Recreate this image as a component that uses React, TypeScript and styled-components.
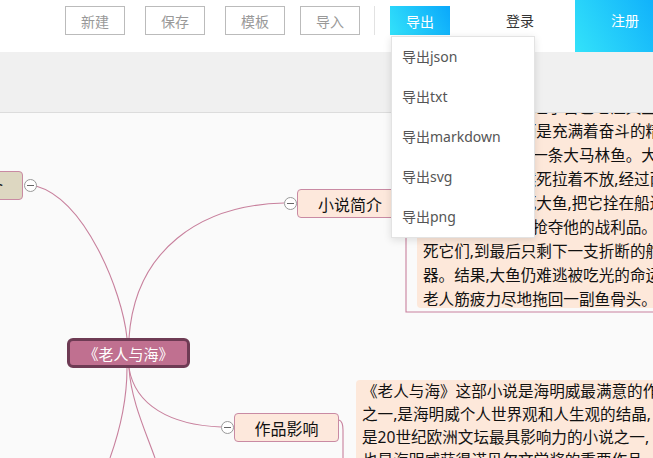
import React from "react"
import styled, { createGlobalStyle, css } from "styled-components"

const GlobalStyle = createGlobalStyle`
  html, body {
    margin: 0;
    padding: 0;
    overflow: hidden;
  }
  body {
    font-family: "Noto Sans", "Noto Sans CJK SC", sans-serif;
    background: #fafafa;
  }
`

const Page = styled.div`
  width: 653px;
  height: 458px;
  overflow: hidden;
  display: flex;
  flex-direction: column;
`

const Header = styled.header`
  position: relative;
  z-index: 5;
  flex: none;
  height: 52px;
  width: 720px;
  background: #fff;
  display: flex;
  align-items: flex-start;
  padding-left: 65px;
  box-sizing: border-box;
`

const ToolButton = styled.button<{ $gap?: number }>`
  margin: 6px 0 0 ${p => p.$gap ?? 0}px;
  width: 60px;
  height: 29px;
  box-sizing: border-box;
  border: 1px solid #bbb;
  background: #fff;
  color: #999;
  font-family: inherit;
  font-size: 14px;
  padding: 0;
  cursor: pointer;
`

const Divider = styled.span`
  margin: 6px 0 0 14px;
  width: 1px;
  height: 29px;
  background: #e2e2e2;
`

const ExportWrap = styled.div`
  position: relative;
  margin-left: 15px;
`

const gradient = css`
  background: linear-gradient(60deg, #33e2fa 0%, #0aa8fb 100%);
  color: #fff;
`

const ExportButton = styled.button`
  ${gradient};
  margin-top: 6px;
  width: 60px;
  height: 29px;
  border: none;
  font-family: inherit;
  font-size: 14px;
  padding: 0;
`

const Menu = styled.ul`
  position: absolute;
  top: 36px;
  left: 1px;
  width: 142px;
  margin: 0;
  padding: 0;
  list-style: none;
  background: #fff;
  border: 1px solid #e3e3e3;
  box-shadow: 0 2px 8px rgba(0, 0, 0, 0.12);
`

const MenuItem = styled.li`
  height: 40px;
  line-height: 40px;
  padding-left: 10px;
  font-size: 14px;
  color: #555;
`

const Login = styled.span`
  margin: 6px 0 0 40px;
  width: 60px;
  height: 29px;
  line-height: 29px;
  text-align: center;
  font-size: 14px;
  color: #333;
`

const Register = styled.span`
  ${gradient};
  margin-left: 25px;
  width: 100px;
  height: 52px;
  padding-top: 11px;
  box-sizing: border-box;
  line-height: 20px;
  text-align: center;
  font-size: 14px;
`

const Band = styled.div`
  flex: none;
  height: 60px;
  background: #f0f0f0;
  border-bottom: 1px solid #dcdcdc;
`

const Canvas = styled.div`
  position: relative;
  flex: 1;
  overflow: hidden;
  background: #fafafa;
`

const Links = styled.svg`
  position: absolute;
  left: 0;
  top: 0;
  width: 653px;
  height: 345px;
  overflow: visible;
`

type Pos = { $x: number; $y: number }

const Node = styled.div<Pos & { $w: number; $kind?: "root" | "side" }>`
  position: absolute;
  left: ${p => p.$x}px;
  top: ${p => p.$y}px;
  width: ${p => p.$w}px;
  height: 29px;
  box-sizing: border-box;
  display: flex;
  align-items: center;
  justify-content: center;
  border: 1px solid #c98aa3;
  border-radius: 4px;
  background: #fde8dc;
  color: #111;
  font-size: 16px;
  ${p => p.$kind === "side" && css`
    background: #ddd7c1;
  `}
  ${p => p.$kind === "root" && css`
    height: 30px;
    border: 3px solid #6e3b54;
    border-radius: 6px;
    background: #c07090;
    color: #fff;
    font-size: 15px;
  `}
`

const Toggle = styled.span<Pos>`
  position: absolute;
  left: ${p => p.$x - 6.5}px;
  top: ${p => p.$y - 6.5}px;
  width: 13px;
  height: 13px;
  box-sizing: border-box;
  border: 1px solid #999;
  border-radius: 50%;
  background: #fff;

  &::after {
    content: "";
    position: absolute;
    left: 2px;
    right: 2px;
    top: 5px;
    height: 1px;
    background: #666;
  }
`

const Note = styled.div<Pos & { $h: number; $lh: number }>`
  position: absolute;
  left: ${p => p.$x}px;
  top: ${p => p.$y}px;
  width: 340px;
  height: ${p => p.$h}px;
  padding-left: 6px;
  box-sizing: border-box;
  border-radius: 4px;
  background: #fde8da;
  color: #111;
  font-size: 15.6px;
  line-height: ${p => p.$lh}px;
  white-space: nowrap;
`

const NoteLine = styled.div``

const summary = [
  "《老人与海》讲述了古巴老渔夫圣地亚哥连续",
  "但他仍不认输,而是充满着奋斗的精神,终于",
  "第八十五天钓到一条大马林鱼。大鱼拖着船",
  "鱼拖着船,他依然死拉着不放,经过两天两夜",
  "经过两夜,他杀死大鱼,把它拴在船边。但是",
  "但群鲨立刻前来抢夺他的战利品。他一一杀",
  "死它们,到最后只剩下一支折断的舵柄作为武",
  "器。结果,大鱼仍难逃被吃光的命运,最终,",
  "老人筋疲力尽地拖回一副鱼骨头。",
]

const influence = [
  "《老人与海》这部小说是海明威最满意的作品",
  "之一,是海明威个人世界观和人生观的结晶,",
  "是20世纪欧洲文坛最具影响力的小说之一,",
  "也是海明威获得诺贝尔文学奖的重要作品。",
]

const exportsList = ["导出json", "导出txt", "导出markdown", "导出svg", "导出png"]

export default function App() {
  return (
    <Page>
      <GlobalStyle />
      <Header>
        <ToolButton>新建</ToolButton>
        <ToolButton $gap={20}>保存</ToolButton>
        <ToolButton $gap={20}>模板</ToolButton>
        <ToolButton $gap={15}>导入</ToolButton>
        <Divider />
        <ExportWrap>
          <ExportButton>导出</ExportButton>
          <Menu>
            {exportsList.map(item => <MenuItem key={item}>{item}</MenuItem>)}
          </Menu>
        </ExportWrap>
        <Login>登录</Login>
        <Register>注册</Register>
      </Header>
      <Band />
      <Canvas>
        <Links fill="none" stroke="#c8809d" strokeWidth="1.1">
          <path d="M36 73 C85 87, 122 177, 127 225" />
          <path d="M284 90 C200 92, 135 137, 129 225" />
          <path d="M221 314 C170 312, 135 292, 129 255" />
          <path d="M127 255 C127 287, 120 317, 110 345" />
          <path d="M129 255 C131 287, 145 317, 155 345" />
          <path d="M403 83 C405 84, 406 87, 406 97 L406 199 L660 199" />
          <path d="M339 307 C342 308, 343 311, 343 317 L343 345" />
        </Links>

        <Node $x={-81} $y={58} $w={104} $kind="side">作者简介</Node>
        <Toggle $x={30.5} $y={72} />

        <Note $x={417} $y={-18} $h={213} $lh={24}>
          {summary.map(line => <NoteLine key={line}>{line}</NoteLine>)}
        </Note>
        <Node $x={297} $y={76} $w={106}>小说简介</Node>
        <Toggle $x={290.5} $y={90.5} />

        <Node $x={67} $y={225} $w={123} $kind="root">《老人与海》</Node>

        <Note $x={356} $y={267} $h={120} $lh={23}>
          {influence.map(line => <NoteLine key={line}>{line}</NoteLine>)}
        </Note>
        <Node $x={234} $y={300} $w={105}>作品影响</Node>
        <Toggle $x={227.5} $y={314.5} />
      </Canvas>
    </Page>
  )
}
